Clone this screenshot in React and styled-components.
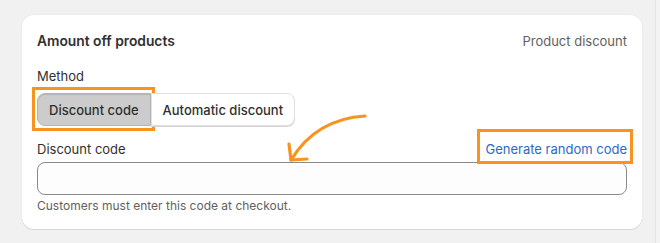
import React, { useState } from 'react';
import styled, { createGlobalStyle } from 'styled-components';

const GlobalStyle = createGlobalStyle`
  body {
    margin: 0;
    background: #f1f1f1;
    font-family: Inter, "Noto Sans", sans-serif;
    color: #303030;
  }
`;

const Page = styled.div`
  display: flex;
  height: 243px;
  overflow: hidden;
`;

const Main = styled.div`
  width: 655px;
  padding: 15px 13px 0 22px;
  box-sizing: border-box;
`;

const SideStrip = styled.div`
  flex: 1;
  border-left: 1px solid #e4e4e4;
  background: #f3f3f3;
`;

const Card = styled.div`
  position: relative;
  background: #fff;
  border-radius: 12px;
  box-shadow: 0 1px 0 #d6d6d6, 0 0 0 1px #ececec;
  padding: 17px 15px 14px;
  height: 214px;
  box-sizing: border-box;
`;

const Header = styled.div`
  display: flex;
  justify-content: space-between;
  align-items: center;
`;

const Title = styled.h2`
  margin: 0;
  font-size: 13.8px;
  font-weight: 620;
  line-height: 18px;
`;

const Subdued = styled.span`
  font-size: 13px;
  color: #616161;
  line-height: 18px;
`;

const Label = styled.div`
  font-size: 13px;
  line-height: 18px;
  color: #303030;
`;

const MethodLabel = styled(Label)`
  margin-top: 17px;
`;

const Segmented = styled.div`
  display: flex;
  margin-top: 8px;
`;

const Segment = styled.button`
  position: relative;
  font-family: inherit;
  font-size: 13px;
  font-weight: 500;
  color: #303030;
  height: 33px;
  padding: 0 11px;
  border: 1px solid ${p => (p.$active ? '#b5b5b5' : '#e0e0e0')};
  background: ${p => (p.$active ? '#cccccc' : '#ffffff')};
  box-shadow: ${p => (p.$active ? 'inset 0 1px 1px rgba(0,0,0,0.12)' : '0 1px 0 #d4d4d4')};
  border-radius: ${p => (p.$first ? '8px 0 0 8px' : '0 8px 8px 0')};
  cursor: pointer;

  &::after {
    content: '';
    display: ${p => (p.$highlight ? 'block' : 'none')};
    position: absolute;
    left: -6px;
    right: -5px;
    top: -7px;
    bottom: -6px;
    border: 3px solid #f7931e;
    pointer-events: none;
  }
`;

const FieldHeader = styled.div`
  display: flex;
  justify-content: space-between;
  align-items: center;
  margin-top: 14px;
`;

const LinkButton = styled.a`
  position: relative;
  font-size: 13px;
  line-height: 18px;
  color: #2a6bc4;
  cursor: pointer;

  &::after {
    content: '';
    position: absolute;
    left: -8px;
    right: -6px;
    top: -11px;
    bottom: -6px;
    border: 3px solid #f7931e;
    pointer-events: none;
  }
`;

const Input = styled.input`
  display: block;
  width: 100%;
  height: 33px;
  margin-top: 4px;
  box-sizing: border-box;
  border: 1px solid #8a8a8a;
  border-radius: 8px;
  background: #fdfdfd;
  font-family: inherit;
  font-size: 13px;
  padding: 0 12px;
  outline: none;
`;

const HelpText = styled.div`
  margin-top: 3px;
  font-size: 12px;
  line-height: 16px;
  color: #616161;
`;

const Arrow = styled.svg`
  position: absolute;
  left: 264px;
  top: 98px;
  pointer-events: none;
`;

export default function App() {
  const [method, setMethod] = useState('code');
  const [code, setCode] = useState('');

  return (
    <>
      <GlobalStyle />
      <Page>
        <Main>
          <Card>
            <Header>
              <Title>Amount off products</Title>
              <Subdued>Product discount</Subdued>
            </Header>
            <MethodLabel>Method</MethodLabel>
            <Segmented>
              <Segment
                $first
                $active={method === 'code'}
                $highlight
                onClick={() => setMethod('code')}
              >
                Discount code
              </Segment>
              <Segment
                $active={method === 'auto'}
                onClick={() => setMethod('auto')}
              >
                Automatic discount
              </Segment>
            </Segmented>
            <FieldHeader>
              <Label>Discount code</Label>
              <LinkButton>Generate random code</LinkButton>
            </FieldHeader>
            <Input value={code} onChange={e => setCode(e.target.value)} />
            <HelpText>Customers must enter this code at checkout.</HelpText>
            <Arrow width="84" height="52" viewBox="0 0 84 52" fill="none">
              <path
                d="M79 3 Q30 6 5 47"
                stroke="#f7931e"
                strokeWidth="3.2"
                strokeLinecap="round"
              />
              <path
                d="M3 31 L5 47 L21 46"
                stroke="#f7931e"
                strokeWidth="3.2"
                strokeLinecap="round"
                strokeLinejoin="round"
              />
            </Arrow>
          </Card>
        </Main>
        <SideStrip />
      </Page>
    </>
  );
}
